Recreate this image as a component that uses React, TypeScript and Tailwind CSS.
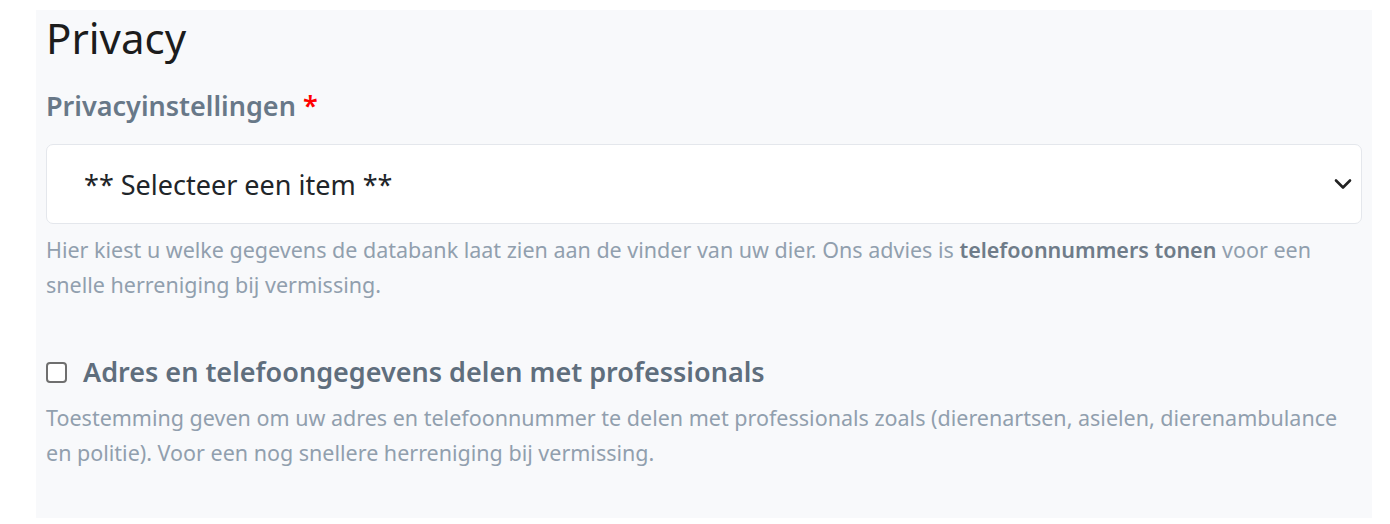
import React from 'react';

export default function App() {
  return (
    <div className="min-h-screen bg-white pl-[36px] pr-[18px] pt-[10px]" style={{ fontFamily: '"Noto Sans", "Open Sans", sans-serif' }}>
      <div className="h-[508px] bg-[#f8f9fb] px-[10px] pt-[4px]">
        <h1 className="text-[42px] leading-[48px] font-normal text-[#1c1c1c]">Privacy</h1>

        <label className="mt-[26px] block text-[27px] leading-[36px] font-semibold text-[#687888]">
          Privacyinstellingen <span className="text-[#ff0000]">*</span>
        </label>

        <div className="mt-[20px] flex h-[80px] items-center justify-between rounded-[7px] border border-[#e4e7ec] bg-white pl-[37px] pr-[9px]">
          <span className="pt-[2px] text-[27px] text-[#212529]">** Selecteer een item **</span>
          <svg width="18" height="12" viewBox="0 0 18 12" fill="none">
            <path d="M2 2.5l7 7 7-7" stroke="#222" strokeWidth="2.6" strokeLinecap="round" strokeLinejoin="round" />
          </svg>
        </div>

        <p className="mt-[8px] text-[21.5px] leading-[35px] text-[#919fae]">
          Hier kiest u welke gegevens de databank laat zien aan de vinder van uw dier. Ons advies is{' '}
          <span className="font-semibold text-[#6f7c89]">telefoonnummers tonen</span> voor een snelle herreniging bij vermissing.
        </p>

        <div className="mt-[50px] flex h-[40px] items-center gap-[16px]">
          <span className="h-[21px] w-[21px] shrink-0 rounded-[4px] border-2 border-[#6f6f6f] bg-white" />
          <span className="text-[27px] leading-[40px] font-semibold text-[#5f6e7d]">
            Adres en telefoongegevens delen met professionals
          </span>
        </div>

        <p className="mt-[8px] text-[21.5px] leading-[35px] text-[#919fae]">
          Toestemming geven om uw adres en telefoonnummer te delen met professionals zoals (dierenartsen, asielen, dierenambulance en politie). Voor een nog snellere herreniging bij vermissing.
        </p>
      </div>
    </div>
  );
}
